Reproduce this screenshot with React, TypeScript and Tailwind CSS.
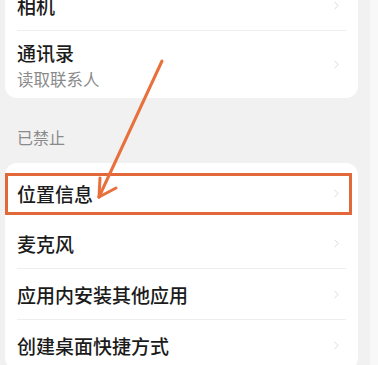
import { ChevronRight } from "lucide-react";

const font = { fontFamily: '"Noto Sans CJK SC", "Noto Sans", sans-serif' };

function Row({ title, sub, divider = true, children }: { title: string; sub?: string; divider?: boolean; children?: React.ReactNode }) {
  return (
    <div className="relative">
      <div className={`flex items-center justify-between pr-[15px] ${sub ? "h-[67px]" : "h-[50px] pt-[1px]"}`}>
        <div className="flex flex-col">
          <span className="text-[19px] leading-[24px] font-medium text-[#1b1b1b]">{title}</span>
          {sub && <span className="mt-[4px] text-[16.5px] leading-[20px] text-[#8a8a8a]">{sub}</span>}
        </div>
        <ChevronRight className="w-[13px] h-[13px] text-[#d0d0d0]" strokeWidth={1.5} />
      </div>
      {divider && <div className="h-px bg-[#eeeeee] mr-[12px]" />}
      {children}
    </div>
  );
}

export default function App() {
  return (
    <div className="relative flex w-[378px] h-[365px] overflow-hidden" style={font}>
      <div className="w-[370px] bg-[#f1f1f1] pl-[5px] pr-[12px]">
        <div className="-mt-[20px] bg-white rounded-[12px] pl-[12px]">
          <Row title="相机" />
          <Row title="通讯录" sub="读取联系人" divider={false} />
        </div>
        <div className="pl-[12px] pt-[27px] pb-[13px] text-[16px] leading-[25px] text-[#8a8a8a]">已禁止</div>
        <div className="bg-white rounded-[12px] pl-[12px] pt-[5px]">
          <Row title="位置信息" divider={false}>
            <div className="absolute -left-[12px] right-[6px] top-[5px] bottom-[3px] border-[3px] border-[#e2683a]" />
          </Row>
          <Row title="麦克风" />
          <Row title="应用内安装其他应用" />
          <Row title="创建桌面快捷方式" divider={false} />
        </div>
      </div>
      <div className="flex-1 bg-[#f8f8f8]" />
      <svg className="absolute inset-0 pointer-events-none" width="378" height="365" viewBox="0 0 378 365">
        <g stroke="#e8703c" strokeWidth="3" strokeLinecap="round" fill="none">
          <line x1="162" y1="61" x2="99" y2="197" />
          <line x1="99" y1="197" x2="116" y2="188" />
          <line x1="99" y1="197" x2="100" y2="178" />
        </g>
      </svg>
    </div>
  );
}
